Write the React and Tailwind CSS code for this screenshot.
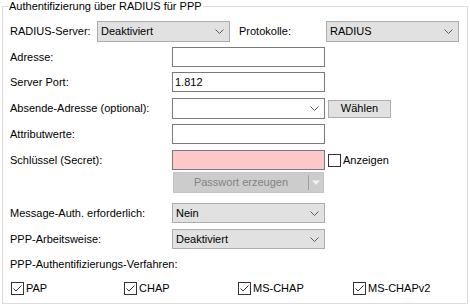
import React from 'react';

function Chevron() {
  return (
    <svg width="9" height="5" viewBox="0 0 9 5" className="shrink-0">
      <path d="M0.5 0.5 L4.5 4.5 L8.5 0.5" fill="none" stroke="#5a5a5a" strokeWidth="1" />
    </svg>
  );
}

function Select({ value, className = '', white = false }) {
  return (
    <div
      className={`flex items-center justify-between border pl-[3px] pr-[5px] ${
        white ? 'border-[#7a7a7a] bg-white' : 'border-[#adadad] bg-[#e1e1e1]'
      } ${className}`}
    >
      <span>{value}</span>
      <Chevron />
    </div>
  );
}

function Input({ value = '', pink = false }) {
  return (
    <div
      className={`flex h-[20px] w-[153px] items-center border px-[2px] ${
        pink ? 'border-[#7a7a7a] bg-[#ffc8c8]' : 'border-[#7a7a7a] bg-white'
      }`}
    >
      {value}
    </div>
  );
}

function Check({ checked }) {
  return (
    <span className="flex h-[13px] w-[13px] shrink-0 items-center justify-center border border-[#333333] bg-white">
      {checked && (
        <svg width="11" height="11" viewBox="0 0 11 11">
          <path d="M1.5 5.5 L4 8 L9.5 2.5" fill="none" stroke="#333333" strokeWidth="1" />
        </svg>
      )}
    </span>
  );
}

function Row({ label, children, className = '' }) {
  return (
    <div className={`flex items-center ${className}`}>
      <span className="w-[162px] shrink-0">{label}</span>
      {children}
    </div>
  );
}

export default function App() {
  const methods = [
    { label: 'PAP', w: 'w-[113px]' },
    { label: 'CHAP', w: 'w-[114px]' },
    { label: 'MS-CHAP', w: 'w-[115px]' },
    { label: 'MS-CHAPv2', w: 'w-[100px]' },
  ];

  return (
    <div className="h-[306px] w-[470px] bg-white font-['Liberation_Sans',Arial,sans-serif] text-[11px] leading-[13px] text-black">
      <fieldset className="ml-[2px] w-[466px] border border-[#dcdcdc] pb-[7px] pl-[7px] pt-[8px]">
        <legend className="ml-[-2px] px-[1px] leading-[13px]">Authentifizierung über RADIUS für PPP</legend>

        {/* Server + Protokoll */}
        <div className="flex h-[21px] items-center">
          <span className="w-[87px] shrink-0">RADIUS-Server:</span>
          <Select value="Deaktiviert" className="h-[21px] w-[133px]" />
          <span className="ml-[9px] w-[87px] shrink-0">Protokolle:</span>
          <Select value="RADIUS" className="h-[21px] w-[133px]" />
        </div>

        <Row label="Adresse:" className="mt-[5px]">
          <Input />
        </Row>
        <Row label="Server Port:" className="mt-[5px]">
          <Input value="1.812" />
        </Row>
        <Row label="Absende-Adresse (optional):" className="mt-[6px]">
          <Select value="" white className="h-[21px] w-[153px]" />
          <button className="ml-[3px] flex h-[18px] w-[63px] items-center justify-center border border-[#adadad] bg-[#e1e1e1]">
            Wählen
          </button>
        </Row>
        <Row label="Attributwerte:" className="mt-[5px]">
          <Input />
        </Row>
        <Row label="Schlüssel (Secret):" className="mt-[6px]">
          <Input pink />
          <span className="ml-[3px] flex items-center gap-[2px]">
            <Check />
            Anzeigen
          </span>
        </Row>
        <div className="ml-[163px] mt-[2px] flex h-[21px] w-[151px] items-center border border-[#c4c4c4] bg-[#cccccc] text-[#838383]">
          <span className="flex-1 text-center">Passwort erzeugen</span>
          <span className="h-[15px] w-px bg-[#a0a0a0]" />
          <svg width="12" height="6" viewBox="0 0 12 6" className="mx-[1px]">
            <path d="M2 0.5 L10 0.5 L6 5 Z" fill="#f2f2f2" />
          </svg>
        </div>

        <Row label="Message-Auth. erforderlich:" className="mt-[10px]">
          <Select value="Nein" className="h-[20px] w-[153px]" />
        </Row>
        <Row label="PPP-Arbeitsweise:" className="mt-[6px]">
          <Select value="Deaktiviert" className="h-[20px] w-[153px]" />
        </Row>

        <div className="mt-[7px] flex h-[16px] items-center">PPP-Authentifizierungs-Verfahren:</div>

        <div className="ml-px mt-[8px] flex h-[16px] items-center">
          {methods.map((m) => (
            <span key={m.label} className={`flex items-center gap-[2px] ${m.w}`}>
              <Check checked />
              {m.label}
            </span>
          ))}
        </div>
      </fieldset>
    </div>
  );
}
